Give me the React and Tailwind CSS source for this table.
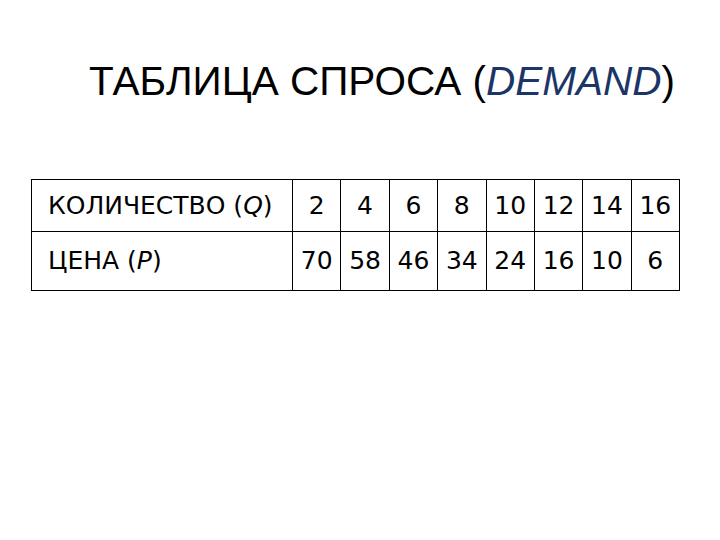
export default function App() {
  const q = [2, 4, 6, 8, 10, 12, 14, 16];
  const p = [70, 58, 46, 34, 24, 16, 10, 6];
  return (
    <div className="w-[720px] h-[540px] bg-white relative overflow-hidden">
      <h1 className="pt-[57px] pl-[89px] text-[40.5px] leading-[48px] text-black font-['Liberation_Sans',Arial,sans-serif] whitespace-nowrap">
        ТАБЛИЦА СПРОСА (<i className="text-[#1c3567]">DEMAND</i>)
      </h1>
      <table className="mt-[74px] ml-[31px] w-[649px] table-fixed border-collapse font-['DejaVu_Sans',Verdana,sans-serif] text-[25px] text-black">
        <tbody>
          <tr className="h-[52px]">
            <td className="border border-black w-[261px] pl-[16px] whitespace-nowrap">КОЛИЧЕСТВО (<i>Q</i>)</td>
            {q.map((v) => (
              <td key={v} className="border border-black text-center">{v}</td>
            ))}
          </tr>
          <tr className="h-[59px]">
            <td className="border border-black pl-[16px]">ЦЕНА (<i>P</i>)</td>
            {p.map((v, i) => (
              <td key={i} className="border border-black text-center">{v}</td>
            ))}
          </tr>
        </tbody>
      </table>
    </div>
  );
}
